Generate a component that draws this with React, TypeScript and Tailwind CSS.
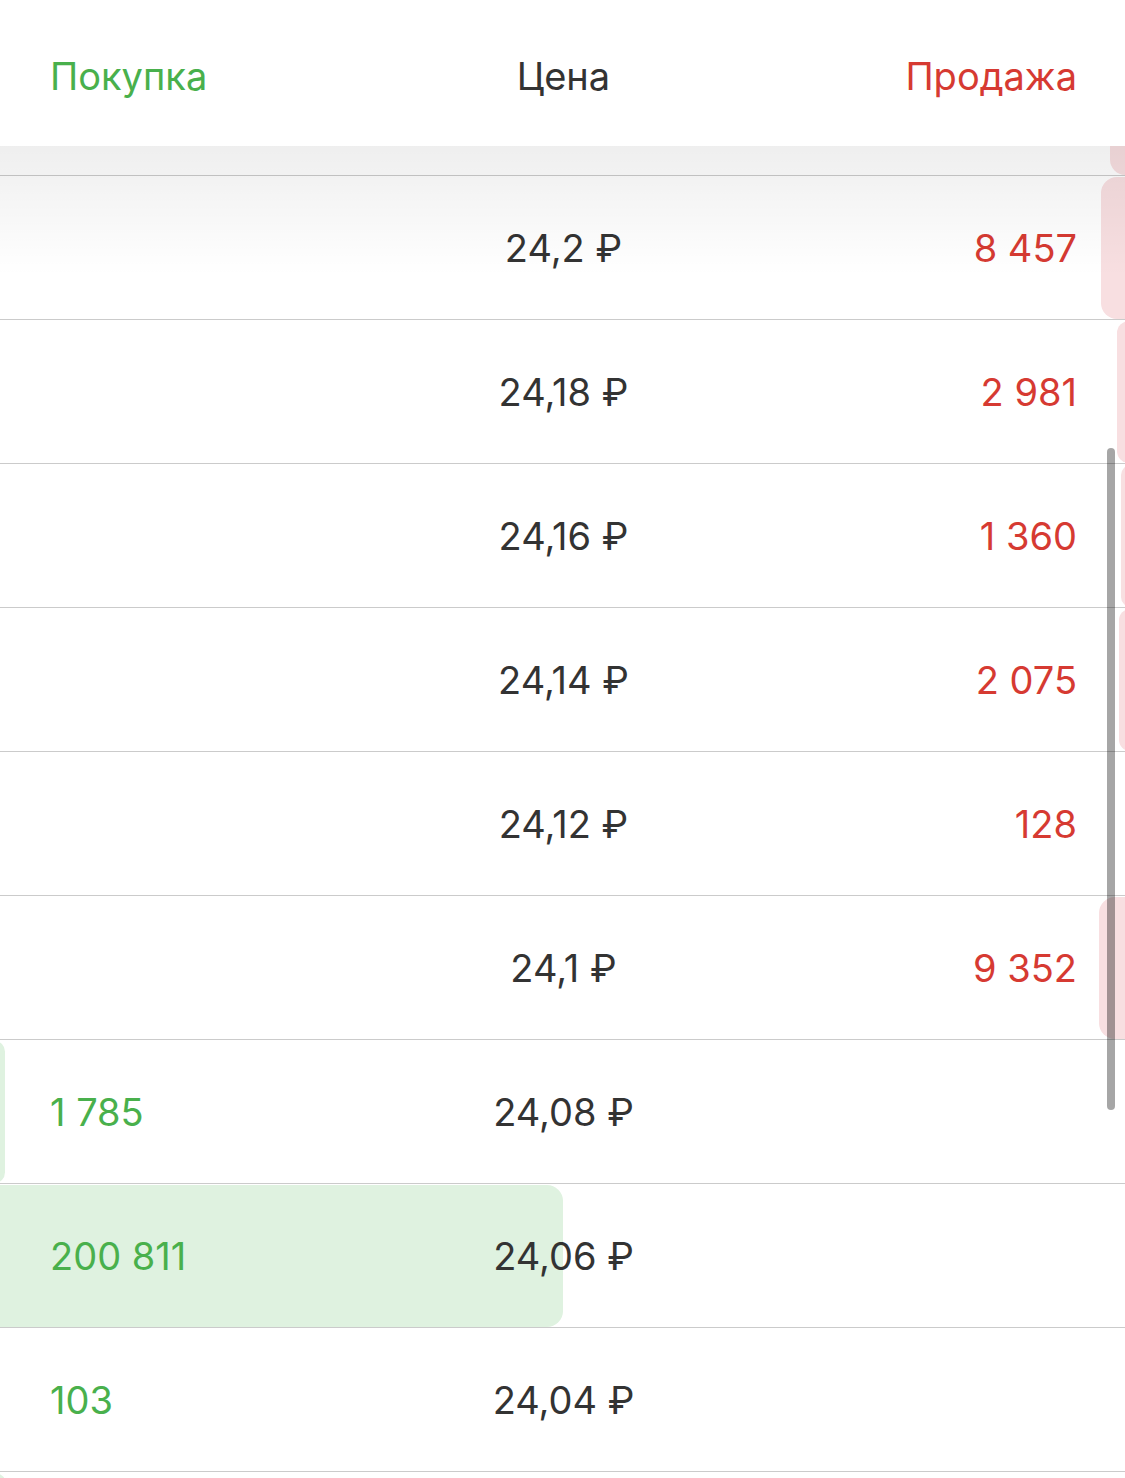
import React from "react"

type Row = { price?: string; buy?: string; sell?: string; vol: number }

const MAX_VOL = 200811
const HALF = 562.5

// first and last rows are only partly scrolled into view
const rows: Row[] = [
  { vol: 5354 },
  { price: "24,2 ₽", sell: "8 457", vol: 8457 },
  { price: "24,18 ₽", sell: "2 981", vol: 2981 },
  { price: "24,16 ₽", sell: "1 360", vol: 1360 },
  { price: "24,14 ₽", sell: "2 075", vol: 2075 },
  { price: "24,12 ₽", sell: "128", vol: 128 },
  { price: "24,1 ₽", sell: "9 352", vol: 9352 },
  { price: "24,08 ₽", buy: "1 785", vol: 1785 },
  { price: "24,06 ₽", buy: "200 811", vol: 200811 },
  { price: "24,04 ₽", buy: "103", vol: 103 },
  { buy: "", vol: 2310 },
]

function BookRow({ row }: { row: Row }) {
  const w = (row.vol / MAX_VOL) * HALF
  const isBuy = row.buy !== undefined
  return (
    <div className="relative grid h-[144px] grid-cols-3 items-center border-b border-[#cbcbcb] pr-[48px] pl-[50px]">
      {/* depth bar, pushed 16px off-screen so only its inner corners show */}
      <div
        className={
          isBuy
            ? "absolute top-px bottom-0 left-[-16px] rounded-2xl bg-[#dff2e0]"
            : "absolute top-px bottom-0 right-[-16px] rounded-2xl bg-[#f8dfe1]"
        }
        style={{ width: w + 16 }}
      />
      <span className="relative text-left text-[#49b04c]">{row.buy}</span>
      <span className="relative text-center text-[#333333]">{row.price}</span>
      <span className="relative text-right text-[#d63a32]">{row.sell}</span>
    </div>
  )
}

export default function App() {
  return (
    <div
      className="relative h-[1478px] w-[1125px] overflow-hidden bg-white text-[38px] leading-none"
      style={{ fontFamily: "Inter, 'Noto Sans', sans-serif" }}
    >
      <header className="relative z-20 grid h-[146px] grid-cols-3 items-center bg-white pt-[6px] pr-[48px] pl-[50px]">
        <span className="text-left text-[#49b04c]">Покупка</span>
        <span className="text-center text-[#333333]">Цена</span>
        <span className="text-right text-[#d63a32]">Продажа</span>
      </header>

      <div className="relative h-[1332px] overflow-hidden">
        <div className="-mt-[114px]">
          {rows.map((r, i) => (
            <BookRow key={i} row={r} />
          ))}
        </div>
        <div className="pointer-events-none absolute inset-x-0 top-0 h-[130px] bg-gradient-to-b from-black/[0.065] to-transparent" />
      </div>

      {/* scroll indicator */}
      <div className="absolute top-[448px] left-[1107px] h-[662px] w-[8px] rounded-full bg-black/35" />
    </div>
  )
}
